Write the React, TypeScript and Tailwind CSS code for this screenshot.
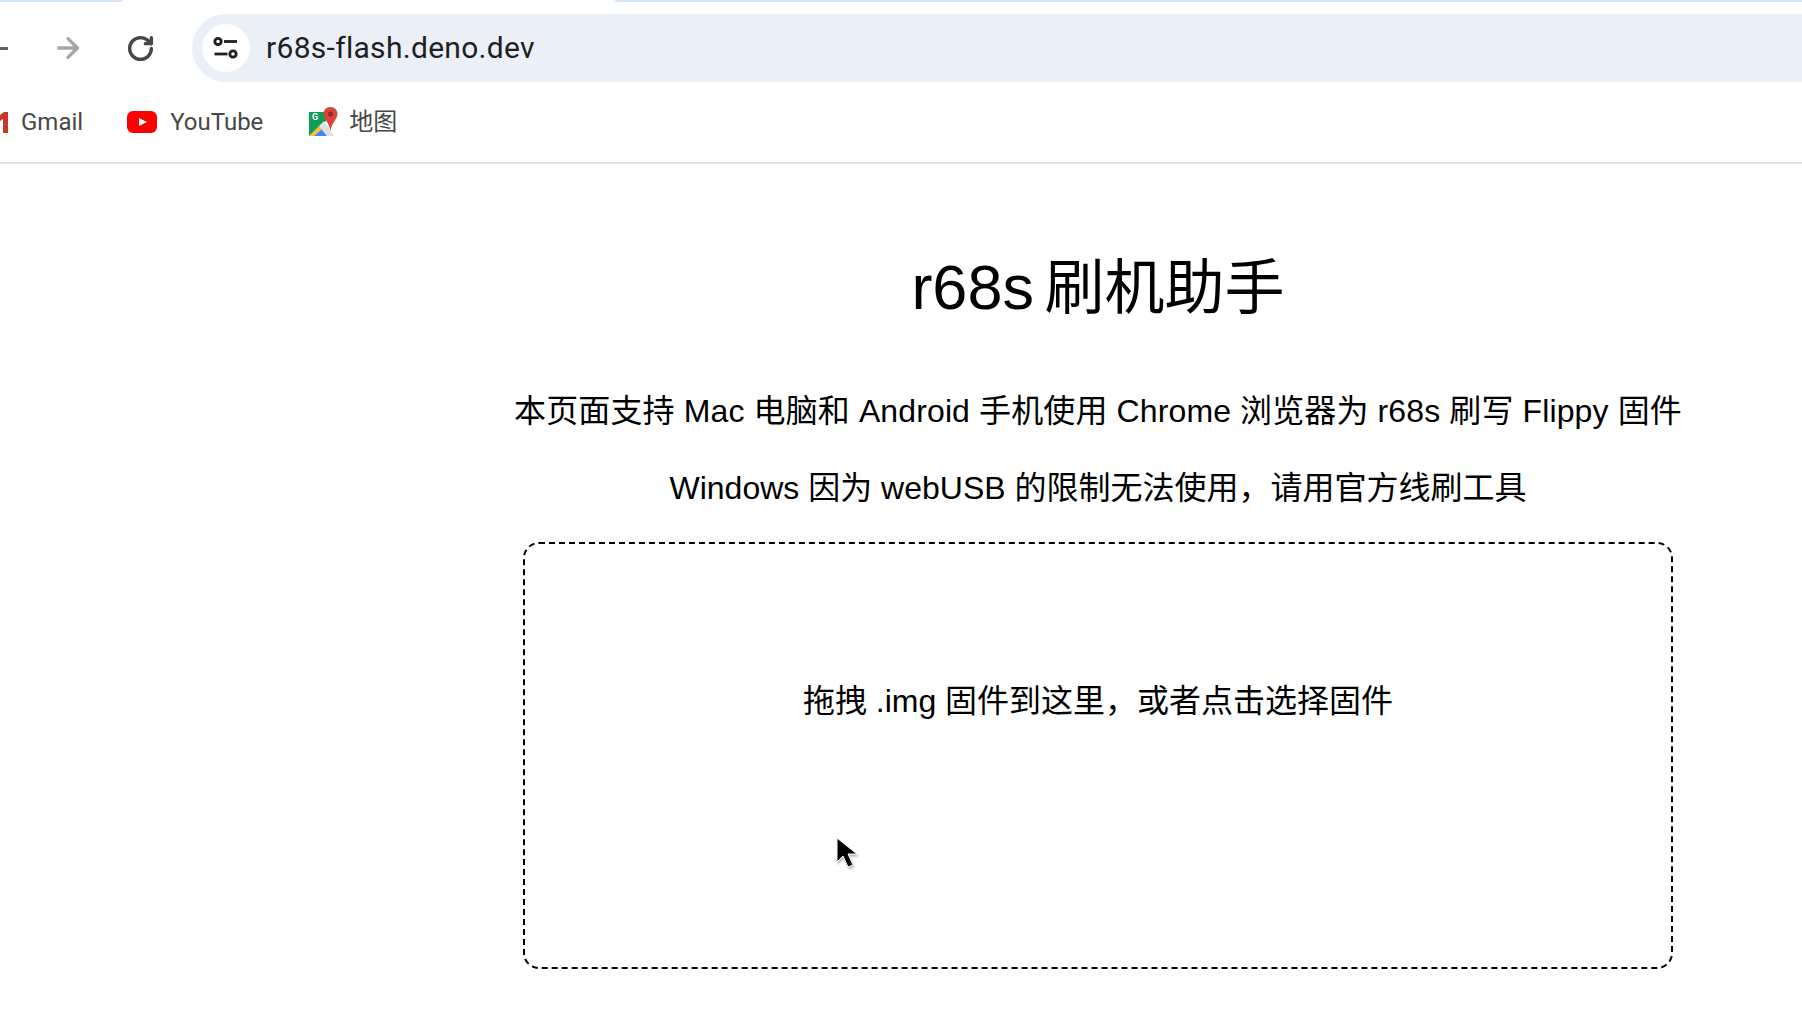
import { RotateCw, ArrowRight } from "lucide-react"

const uiFont = "font-['Roboto','Noto_Sans_CJK_SC',sans-serif]"

function TuneIcon() {
  return (
    <svg width="28" height="28" viewBox="0 0 28 28" fill="none" stroke="#1f1f1f" strokeWidth="2.8">
      <circle cx="6" cy="7.500" r="3.200" />
      <path d="M12 7.500h13" />
      <path d="M2.500 20h13" />
      <circle cx="21" cy="20" r="3.200" />
    </svg>
  )
}

function YoutubeIcon() {
  return (
    <svg width="30" height="22" viewBox="0 0 30 22">
      <rect x="0" y="0" width="30" height="22" rx="6" fill="#ff0000" />
      <path d="M12 7l8 4-8 4z" fill="#fff" />
    </svg>
  )
}

function MapsIcon() {
  return (
    <svg width="30" height="30" viewBox="0 0 30 30">
      <path d="M1 5h17v9L1 29z" fill="#0f9d58" />
      <path d="M1 29l10-10 3 3-8 7z" fill="#fbc02d" />
      <path d="M6 29l8-7 5 7z" fill="#4285f4" />
      <path d="M11 19l5-5 10 15h-7z" fill="#e0e0e0" />
      <path d="M22 0c4.500 0 7.500 3 7.500 7 0 5-5.500 8-7 17-1.500-9-7-12-7-17 0-4 3-7 6.500-7z" fill="#db4437" />
      <circle cx="22.500" cy="7" r="2.600" fill="#8c2f25" />
      <text x="4" y="13" fontSize="9" fontWeight="700" fill="#fff" fontFamily="Roboto, sans-serif">G</text>
    </svg>
  )
}

function Bookmark({ icon, label, className }: { icon: React.ReactNode; label: string; className: string }) {
  return (
    <div className={`flex items-center ${className}`}>
      {icon}
      <span className="text-[24px] leading-[30px] text-[#474747]">{label}</span>
    </div>
  )
}

export default function App() {
  return (
    <div className={`relative h-[1014px] w-[1802px] overflow-hidden bg-white ${uiFont}`}>
      {/* resto das abas no topo */}
      <div className="flex h-[2px]">
        <div className="w-[122px] rounded-br-sm bg-[#d3e3fd]" />
        <div className="ml-[493px] flex-1 rounded-bl-sm bg-[#d3e3fd]" />
      </div>

      {/* toolbar */}
      <div className="mt-[12px] flex h-[68px] items-center">
        <div className="h-[3px] w-[8px] bg-[#5f5f5f]" />
        <ArrowRight className="ml-[44px] h-[32px] w-[32px] text-[#a6a6a6]" strokeWidth={2.5} />
        <RotateCw className="ml-[42px] h-[29px] w-[29px] text-[#474747]" strokeWidth={2.8} />
        <div className="ml-[37px] flex h-[68px] flex-1 items-center rounded-l-[34px] bg-[#ebeff7] pl-[10px]">
          <div className="flex h-[48px] w-[48px] items-center justify-center rounded-full bg-white">
            <TuneIcon />
          </div>
          <span className="ml-[16px] text-[30px] leading-[36px] tracking-[0.3px] text-[#1f1f1f]">r68s-flash.deno.dev</span>
        </div>
      </div>

      {/* bookmarks */}
      <div className="flex h-[82px] items-center border-b-2 border-[#e0e0e0]">
        <Bookmark
          className="ml-0 gap-[13px]"
          icon={
            <svg width="8" height="22" viewBox="0 0 8 22">
              <path d="M0 4l4-3h4v21H3V8L0 10z" fill="#c5392b" />
            </svg>
          }
          label="Gmail"
        />
        <Bookmark className="ml-[44px] gap-[13px]" icon={<YoutubeIcon />} label="YouTube" />
        <Bookmark className="ml-[45px] gap-[11px]" icon={<MapsIcon />} label="地图" />
      </div>

      {/* conteúdo */}
      <main className="flex flex-col items-center pl-[394px] font-['Liberation_Sans','Noto_Sans_CJK_SC',sans-serif] text-black">
        <h1 className="mt-[93px] text-[60px] leading-[60px] font-normal [word-spacing:-6px]">
          <span className="text-[63px]">r68s</span> 刷机助手
        </h1>
        <p className="mt-[68px] text-[32px] leading-[48px] tracking-[0.12px]">本页面支持 Mac 电脑和 Android 手机使用 Chrome 浏览器为 r68s 刷写 Flippy 固件</p>
        <p className="mt-[29px] text-[32px] leading-[48px]">Windows 因为 webUSB 的限制无法使用，请用官方线刷工具</p>
        <div className="mt-[30px] flex h-[427px] w-[1150px] justify-center rounded-[16px] border-2 border-dashed border-black pt-[133px]">
          <span className="text-[32px] leading-[48px]">拖拽 .img 固件到这里，或者点击选择固件</span>
        </div>
      </main>

      {/* cursor */}
      <svg className="absolute left-[835px] top-[836px]" width="24" height="34" viewBox="0 0 24 34">
        <path
          d="M2 2v24l6-6 5 11 5-2-5-11h9z"
          fill="#000"
          stroke="#fff"
          strokeWidth="1"
          style={{ filter: "drop-shadow(1px 2px 1px rgba(0,0,0,0.3))" }}
        />
      </svg>
    </div>
  )
}
